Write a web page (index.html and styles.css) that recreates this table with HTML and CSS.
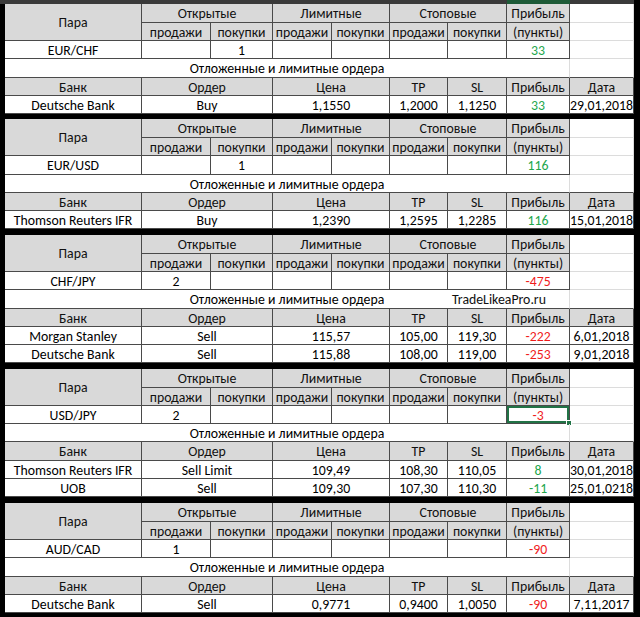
FILE: index.html
```html
<!DOCTYPE html>
<html lang="ru">
<head>
<meta charset="utf-8">
<title>Ордера</title>
<link rel="stylesheet" href="styles.css">
</head>
<body>
<div class="topbar"><span class="tb-a"></span><span class="tb-sel"></span><span class="tb-b"></span></div>
<div class="sheet">

<table class="blk gap5">
<colgroup><col class="w1"><col class="w2"><col class="w3"><col class="w4"><col class="w5"><col class="w6"><col class="w7"><col class="w8"><col class="w9"></colgroup>
<tr class="r19"><th rowspan="2">Пара</th><th colspan="2">Открытые</th><th colspan="2">Лимитные</th><th colspan="2">Стоповые</th><th>Прибыль</th><td class="free"></td></tr>
<tr><th>продажи</th><th>покупки</th><th>продажи</th><th>покупки</th><th>продажи</th><th>покупки</th><th>(пункты)</th><td class="free"></td></tr>
<tr><td>EUR/CHF</td><td></td><td>1</td><td></td><td></td><td></td><td></td><td class="pos">33</td><td class="free"></td></tr>
<tr class="r19"><td colspan="8" class="note">Отложенные и лимитные ордера</td><td class="free dk"></td></tr>
<tr><th>Банк</th><th colspan="2">Ордер</th><th colspan="2">Цена</th><th>TP</th><th>SL</th><th>Прибыль</th><th>Дата</th></tr>
<tr><td>Deutsche Bank</td><td colspan="2">Buy</td><td colspan="2">1,1550</td><td>1,2000</td><td>1,1250</td><td class="pos">33</td><td>29,01,2018</td></tr>
</table>

<table class="blk gap6">
<colgroup><col class="w1"><col class="w2"><col class="w3"><col class="w4"><col class="w5"><col class="w6"><col class="w7"><col class="w8"><col class="w9"></colgroup>
<tr class="r19"><th rowspan="2">Пара</th><th colspan="2">Открытые</th><th colspan="2">Лимитные</th><th colspan="2">Стоповые</th><th>Прибыль</th><td class="free"></td></tr>
<tr><th>продажи</th><th>покупки</th><th>продажи</th><th>покупки</th><th>продажи</th><th>покупки</th><th>(пункты)</th><td class="free"></td></tr>
<tr class="r19"><td>EUR/USD</td><td></td><td>1</td><td></td><td></td><td></td><td></td><td class="pos">116</td><td class="free"></td></tr>
<tr><td colspan="8" class="note">Отложенные и лимитные ордера</td><td class="free dk"></td></tr>
<tr><th>Банк</th><th colspan="2">Ордер</th><th colspan="2">Цена</th><th>TP</th><th>SL</th><th>Прибыль</th><th>Дата</th></tr>
<tr><td>Thomson Reuters IFR</td><td colspan="2">Buy</td><td colspan="2">1,2390</td><td>1,2595</td><td>1,2285</td><td class="pos">116</td><td>15,01,2018</td></tr>
</table>

<table class="blk gap6">
<colgroup><col class="w1"><col class="w2"><col class="w3"><col class="w4"><col class="w5"><col class="w6"><col class="w7"><col class="w8"><col class="w9"></colgroup>
<tr class="r19"><th rowspan="2">Пара</th><th colspan="2">Открытые</th><th colspan="2">Лимитные</th><th colspan="2">Стоповые</th><th>Прибыль</th><td class="free"></td></tr>
<tr><th>продажи</th><th>покупки</th><th>продажи</th><th>покупки</th><th>продажи</th><th>покупки</th><th>(пункты)</th><td class="free"></td></tr>
<tr><td>CHF/JPY</td><td>2</td><td></td><td></td><td></td><td></td><td></td><td class="neg">-475</td><td class="free"></td></tr>
<tr class="r19"><td colspan="8" class="note">Отложенные и лимитные ордера<span class="wm">TradeLikeaPro.ru</span></td><td class="free dk"></td></tr>
<tr><th>Банк</th><th colspan="2">Ордер</th><th colspan="2">Цена</th><th>TP</th><th>SL</th><th>Прибыль</th><th>Дата</th></tr>
<tr><td>Morgan Stanley</td><td colspan="2">Sell</td><td colspan="2">115,57</td><td>105,00</td><td>119,30</td><td class="neg">-222</td><td>6,01,2018</td></tr>
<tr><td>Deutsche Bank</td><td colspan="2">Sell</td><td colspan="2">115,88</td><td>108,00</td><td>119,00</td><td class="neg">-253</td><td>9,01,2018</td></tr>
</table>

<table class="blk gap6">
<colgroup><col class="w1"><col class="w2"><col class="w3"><col class="w4"><col class="w5"><col class="w6"><col class="w7"><col class="w8"><col class="w9"></colgroup>
<tr class="r19"><th rowspan="2">Пара</th><th colspan="2">Открытые</th><th colspan="2">Лимитные</th><th colspan="2">Стоповые</th><th>Прибыль</th><td class="free"></td></tr>
<tr><th>продажи</th><th>покупки</th><th>продажи</th><th>покупки</th><th>продажи</th><th>покупки</th><th>(пункты)</th><td class="free"></td></tr>
<tr><td>USD/JPY</td><td>2</td><td></td><td></td><td></td><td></td><td></td><td class="neg sel">-3</td><td class="free"></td></tr>
<tr><td colspan="8" class="note">Отложенные и лимитные ордера</td><td class="free dk"></td></tr>
<tr class="r19"><th>Банк</th><th colspan="2">Ордер</th><th colspan="2">Цена</th><th>TP</th><th>SL</th><th>Прибыль</th><th>Дата</th></tr>
<tr><td>Thomson Reuters IFR</td><td colspan="2">Sell Limit</td><td colspan="2">109,49</td><td>108,30</td><td>110,05</td><td class="pos">8</td><td>30,01,2018</td></tr>
<tr><td>UOB</td><td colspan="2">Sell</td><td colspan="2">109,30</td><td>107,30</td><td>110,30</td><td class="pos">-11</td><td>25,01,0218</td></tr>
</table>

<table class="blk">
<colgroup><col class="w1"><col class="w2"><col class="w3"><col class="w4"><col class="w5"><col class="w6"><col class="w7"><col class="w8"><col class="w9"></colgroup>
<tr class="r19"><th rowspan="2">Пара</th><th colspan="2">Открытые</th><th colspan="2">Лимитные</th><th colspan="2">Стоповые</th><th>Прибыль</th><td class="free"></td></tr>
<tr><th>продажи</th><th>покупки</th><th>продажи</th><th>покупки</th><th>продажи</th><th>покупки</th><th>(пункты)</th><td class="free"></td></tr>
<tr><td>AUD/CAD</td><td>1</td><td></td><td></td><td></td><td></td><td></td><td class="neg">-90</td><td class="free"></td></tr>
<tr class="r19"><td colspan="8" class="note">Отложенные и лимитные ордера</td><td class="free dk"></td></tr>
<tr><th>Банк</th><th colspan="2">Ордер</th><th colspan="2">Цена</th><th>TP</th><th>SL</th><th>Прибыль</th><th>Дата</th></tr>
<tr><td>Deutsche Bank</td><td colspan="2">Sell</td><td colspan="2">0,9771</td><td>0,9400</td><td>1,0050</td><td class="neg">-90</td><td>7,11,2017</td></tr>
</table>

</div>
</body>
</html>
```

FILE: styles.css
```css
html, body {
  margin: 0;
  padding: 0;
  background: #000;
}

body {
  width: 640px;
  height: 617px;
  overflow: hidden;
  font-family: Carlito, Lato, "Open Sans", sans-serif;
  font-size: 13.8px;
  color: #000;
}

.topbar {
  display: flex;
  height: 4px;
}
.tb-a { width: 507px; background: #3a3a3a; }
.tb-sel { width: 63px; background: #1d5a37; }
.tb-b { width: 64px; background: #3a3a3a; }

.sheet {
  padding-left: 5px;
}

.blk {
  border-collapse: separate;
  border-spacing: 0;
  table-layout: fixed;
  width: 629px;
  background: #fff;
}
.gap5 { margin-bottom: 5px; }
.gap6 { margin-bottom: 6px; }

.w1 { width: 137px; }
.w2 { width: 69px; }
.w3 { width: 62px; }
.w4 { width: 59px; }
.w5 { width: 58px; }
.w6 { width: 58px; }
.w7 { width: 59px; }
.w8 { width: 63px; }
.w9 { width: 64px; }

.blk tr { height: 18px; }
.blk tr.r19 { height: 19px; }

.blk th,
.blk td {
  padding: 1px 0 0;
  border: 0;
  border-right: 1px solid #4a4a4a;
  border-bottom: 1px solid #4a4a4a;
  text-align: center;
  vertical-align: middle;
  line-height: 15px;
  white-space: nowrap;
  overflow: hidden;
  font-weight: normal;
}

.blk th {
  background: #d9d9d9;
  color: #111;
}

.blk td.free {
  background: #fff;
  border-right: 1px solid #dcdcdc;
  border-bottom: 1px solid #dcdcdc;
}
.blk td.free.dk {
  border-bottom-color: #4a4a4a;
}

.blk td.note {
  position: relative;
  border-right: 1px solid #dcdcdc;
}

.wm {
  position: absolute;
  left: 447px;
  top: 2px;
  color: #111;
}

.pos { color: #22a64c; }
.neg { color: #f01c1c; }

.blk td.sel {
  position: relative;
  overflow: visible;
  box-shadow: inset 0 0 0 2px #217346;
}
.blk td.sel::after {
  content: "";
  position: absolute;
  right: -3px;
  bottom: -3px;
  width: 6px;
  height: 6px;
  background: #217346;
  border: 1px solid #fff;
  box-sizing: border-box;
}
```
